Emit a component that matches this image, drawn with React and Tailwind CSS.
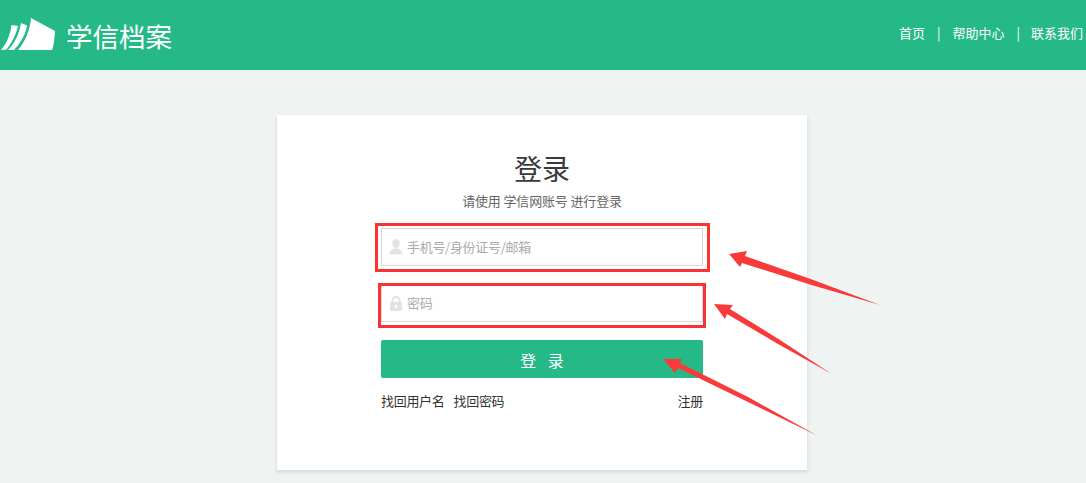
const cjk = { fontFamily: '"Noto Sans CJK SC", "Liberation Sans", sans-serif' };

function Logo() {
  return (
    <svg width="58" height="36" viewBox="0 0 58 36" className="mb-[2px] shrink-0" fill="#fff">
      <path d="M31 2 L55 15 C54.5 22 54 29 52 34 L18 34 C25 26 30 14 31 2 Z" />
      <path d="M21 7 L27 9.5 C26 18 20 28 14 34 L8 34 C15 27 19.5 17 21 7 Z" />
      <path d="M11.5 9 L18 10 C16 19 11 28 6.5 33.5 L1 34 C7 27 10.5 18 11.5 9 Z" />
    </svg>
  );
}

function UserIcon() {
  return (
    <svg width="14" height="16" viewBox="0 0 14 16" fill="#e3e3e3">
      <ellipse cx="7" cy="4.5" rx="3.6" ry="4.5" />
      <path d="M0.5 15.5 C0.5 11.5 3 10.5 5 9.5 L9 9.5 C11 10.5 13.5 11.5 13.5 15.5 Z" />
    </svg>
  );
}

function LockIcon() {
  return (
    <svg width="14" height="15" viewBox="0 0 14 15">
      <path d="M3.5 7 V4.2 a3.5 3.5 0 0 1 7 0 V7" fill="none" stroke="#e3e3e3" strokeWidth="2" />
      <rect x="1" y="6" width="12" height="9" rx="1.5" fill="#e3e3e3" />
      <rect x="6" y="9" width="2" height="3" fill="#fff" />
    </svg>
  );
}

function Field({ icon, text, className }) {
  return (
    <div className={`flex h-[38px] items-center gap-[4px] border border-[#d6d6d6] pl-[7px] text-[13px] tracking-[-0.3px] text-[#aaaaaa] ${className}`}>
      <span className="flex w-[14px] justify-center">{icon}</span>
      <span>{text}</span>
    </div>
  );
}

export default function App() {
  return (
    <div className="relative h-[483px] w-full overflow-hidden bg-[#eff3f2]" style={cjk}>
      <header className="flex h-[70px] items-center justify-between bg-[#25b988] pr-[3px] text-white">
        <div className="flex items-center gap-[8px]">
          <Logo />
          <span className="mt-[2px] text-[26.5px] leading-none font-normal">学信档案</span>
        </div>
        <nav className="mb-[4px] flex items-center text-[13px]">
          <span>首页</span>
          <span className="mx-[12px]">|</span>
          <span>帮助中心</span>
          <span className="ml-[12px] mr-[11px]">|</span>
          <span>联系我们</span>
        </nav>
      </header>

      <main className="flex justify-center pt-[45px]">
        <section className="ml-[-2px] flex h-[355px] w-[530px] flex-col bg-white px-[104px] pt-[34px] shadow-[0_2px_3px_1px_rgba(0,0,0,0.08)]">
          <h1 className="text-center text-[28px] leading-[38px] text-[#3a3a3a]">登录</h1>
          <p className="mt-[4px] text-center text-[13px] leading-[19px] tracking-[-0.15px] text-[#666666]">请使用 学信网账号 进行登录</p>
          <Field icon={<UserIcon />} text="手机号/身份证号/邮箱" className="mt-[18px]" />
          <Field icon={<LockIcon />} text="密码" className="mt-[18px]" />
          <button className="mt-[18px] h-[38px] rounded-[2px] bg-[#25b988] pl-[4px] pt-[1px] text-[16px] tracking-[4px] text-white">登 录</button>
          <div className="mt-[13px] flex justify-between text-[13px] leading-[20px] tracking-[-0.3px] text-[#333333]">
            <div className="flex gap-[9px]">
              <span>找回用户名</span>
              <span>找回密码</span>
            </div>
            <span>注册</span>
          </div>
        </section>
      </main>

      {/* annotations drawn on top of the screenshot */}
      <div className="absolute left-[375px] top-[223px] h-[49px] w-[335px] border-[3px] border-[#f93333]" />
      <div className="absolute left-[378px] top-[283px] h-[45px] w-[328px] border-[3px] border-[#f93333]" />
      <svg className="absolute left-0 top-0" width="1086" height="483" fill="#f93a3a">
        <polygon points="729,254 747,251 745,256 812,279.6 880,305 810,284.4 742,263 740,267" />
        <polygon points="714,304 733,305 730,309 780,340 831,373.5 778,344 727,314 725,319" />
        <polygon points="663,359 682,359 680,363 748,397 817,435.5 746,401 678,368 675,373" />
      </svg>
    </div>
  );
}
